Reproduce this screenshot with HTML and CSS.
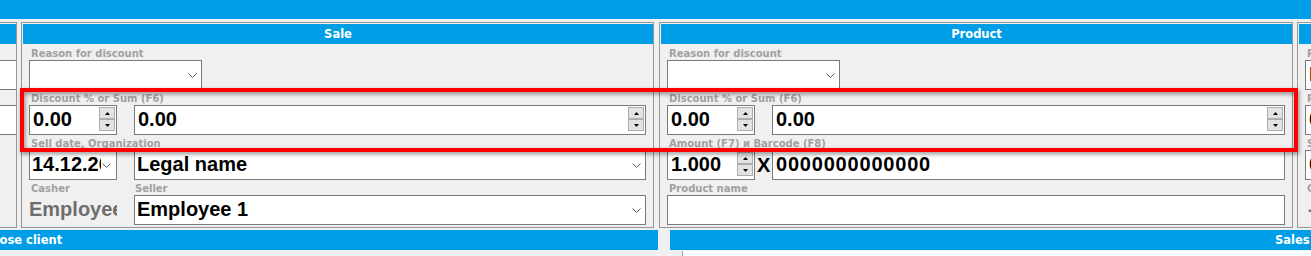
FILE: index.html
```html
<!DOCTYPE html>
<html>
<head>
<meta charset="utf-8">
<link rel="stylesheet" href="styles.css">
</head>
<body>
<div class="topbar"></div>

<div class="panels">
  <section class="panel panel-left">
    <div class="panel-head"></div>
    <div class="panel-body">
      <div class="row"><div class="label"></div><div class="box wide"></div></div>
      <div class="row"><div class="label"></div><div class="box wide"></div></div>
    </div>
  </section>

  <section class="panel panel-sale">
    <div class="panel-head">Sale</div>
    <div class="panel-body">
      <div class="row">
        <div class="label">Reason for discount</div>
        <div class="box combo reason"><span class="value"></span><svg class="chev" width="9" height="5" viewBox="0 0 9 5"><polyline points="0.5,0.5 4.5,4.5 8.5,0.5"/></svg></div>
      </div>
      <div class="row">
        <div class="label">Discount % or Sum (F6)</div>
        <div class="box c1"><span class="value">0.00</span><div class="spin"><div class="sbtn"><svg width="5" height="3" viewBox="0 0 5 3"><polygon points="2.5,0 5,3 0,3"/></svg></div><div class="sbtn"><svg width="5" height="3" viewBox="0 0 5 3"><polygon points="0,0 5,0 2.5,3"/></svg></div></div></div>
        <div class="box c3"><span class="value">0.00</span><div class="spin"><div class="sbtn"><svg width="5" height="3" viewBox="0 0 5 3"><polygon points="2.5,0 5,3 0,3"/></svg></div><div class="sbtn"><svg width="5" height="3" viewBox="0 0 5 3"><polygon points="0,0 5,0 2.5,3"/></svg></div></div></div>
      </div>
      <div class="row">
        <div class="label">Sell date, Organization</div>
        <div class="box c1 combo date"><span class="value">14.12.2019</span><svg class="chev" width="9" height="5" viewBox="0 0 9 5"><polyline points="0.5,0.5 4.5,4.5 8.5,0.5"/></svg></div>
        <div class="box c3 combo"><span class="value">Legal name</span><svg class="chev" width="9" height="5" viewBox="0 0 9 5"><polyline points="0.5,0.5 4.5,4.5 8.5,0.5"/></svg></div>
      </div>
      <div class="row">
        <div class="label c1">Casher</div>
        <div class="label c3">Seller</div>
        <div class="plain c1">Employee 1</div>
        <div class="box c3 combo"><span class="value">Employee 1</span><svg class="chev" width="9" height="5" viewBox="0 0 9 5"><polyline points="0.5,0.5 4.5,4.5 8.5,0.5"/></svg></div>
      </div>
    </div>
  </section>

  <section class="panel panel-product">
    <div class="panel-head">Product</div>
    <div class="panel-body">
      <div class="row">
        <div class="label">Reason for discount</div>
        <div class="box combo reason"><span class="value"></span><svg class="chev" width="9" height="5" viewBox="0 0 9 5"><polyline points="0.5,0.5 4.5,4.5 8.5,0.5"/></svg></div>
      </div>
      <div class="row">
        <div class="label">Discount % or Sum (F6)</div>
        <div class="box c1"><span class="value">0.00</span><div class="spin"><div class="sbtn"><svg width="5" height="3" viewBox="0 0 5 3"><polygon points="2.5,0 5,3 0,3"/></svg></div><div class="sbtn"><svg width="5" height="3" viewBox="0 0 5 3"><polygon points="0,0 5,0 2.5,3"/></svg></div></div></div>
        <div class="box c3"><span class="value">0.00</span><div class="spin"><div class="sbtn"><svg width="5" height="3" viewBox="0 0 5 3"><polygon points="2.5,0 5,3 0,3"/></svg></div><div class="sbtn"><svg width="5" height="3" viewBox="0 0 5 3"><polygon points="0,0 5,0 2.5,3"/></svg></div></div></div>
      </div>
      <div class="row">
        <div class="label">Amount (F7) и Barcode (F8)</div>
        <div class="box c1"><span class="value">1.000</span><div class="spin"><div class="sbtn"><svg width="5" height="3" viewBox="0 0 5 3"><polygon points="2.5,0 5,3 0,3"/></svg></div><div class="sbtn"><svg width="5" height="3" viewBox="0 0 5 3"><polygon points="0,0 5,0 2.5,3"/></svg></div></div></div>
        <div class="times c2">X</div>
        <div class="box c3"><span class="value barcode">0000000000000</span></div>
      </div>
      <div class="row">
        <div class="label">Product name</div>
        <div class="box wide"></div>
      </div>
    </div>
  </section>

  <section class="panel panel-right">
    <div class="panel-head"></div>
    <div class="panel-body">
      <div class="rcol">
        <div class="row one"><div class="label">Rounding</div><div class="box wide"><span class="value">Legal</span></div></div>
        <div class="row one"><div class="label">Received</div><div class="box wide"><span class="value">0.00</span></div></div>
        <div class="row one"><div class="label">Sum</div><div class="box wide"><span class="value">0.00</span></div></div>
        <div class="row one"><div class="label">Change</div><div class="plain wide">-</div></div>
      </div>
    </div>
  </section>
</div>

<div class="bottom">
  <div class="col-left">
    <div class="bar bar-left">Choose client</div>
  </div>
  <div class="col-right">
    <div class="bar bar-right">Sales</div>
    <div class="sales-body"><div class="gutter"></div><div class="cells"></div></div>
  </div>
</div>

<div class="highlight"></div>
</body>
</html>
```

FILE: styles.css
```css
body {
  margin: 0;
  width: 1311px;
  height: 256px;
  overflow: hidden;
  position: relative;
  background: #f0f0f0;
  font-family: "DejaVu Sans", sans-serif;
}

.topbar {
  height: 19px;
  background: #009ee6;
}

.panels {
  display: flex;
  gap: 4px;
  margin-top: 3px;
  height: 206px;
}

.panel {
  box-sizing: border-box;
  height: 206px;
  border: 1px solid #979797;
  overflow: hidden;
  flex: none;
}

.panel-left {
  width: 17px;
  border-left: 0;
}

.panel-sale {
  width: 633px;
}

.panel-product {
  width: 634px;
  margin-left: 1px;
}

.panel-right {
  flex: 1;
  min-width: 0;
  border-right: 0;
}

.panel-head {
  height: 20px;
  margin: 1px 0 0 1px;
  background: #009ee6;
  color: #fff;
  font-weight: 700;
  font-size: 11.5px;
  line-height: 20px;
  text-align: center;
  white-space: nowrap;
}

.panel-left .panel-head {
  margin-left: 0;
}

.panel-body {
  padding: 1px 7px 0;
}

.panel-left .panel-body {
  padding-left: 0;
}

.row {
  display: grid;
  grid-template-columns: 88px 17px 1fr;
  grid-template-rows: 15px 30px;
}

.row.one {
  grid-template-columns: 1fr;
}

.rcol {
  width: 220px;
}

.label {
  grid-column: 1 / -1;
  grid-row: 1;
  font-size: 10px;
  font-weight: 700;
  color: #a0a0a0;
  line-height: 15px;
  padding: 1px 0 0 2px;
  box-sizing: border-box;
  white-space: nowrap;
  overflow: hidden;
}

.label.c1 { grid-column: 1; }
.label.c3 { grid-column: 3; padding-left: 1px; }

.c1 { grid-column: 1; }
.c2 { grid-column: 2; }
.c3 { grid-column: 3; }
.wide { grid-column: 1 / -1; }

.box {
  grid-row: 2;
  box-sizing: border-box;
  height: 30px;
  border: 1px solid #7a7a7a;
  background: #fff;
  display: flex;
  align-items: center;
  min-width: 0;
  overflow: hidden;
}

.panel-left .box {
  margin-right: 7px;
  border-left: 0;
}

.box.reason {
  grid-column: 1 / -1;
  width: 173px;
}

.value {
  flex: 1;
  min-width: 0;
  overflow: hidden;
  white-space: nowrap;
  padding: 0 0 2px 3px;
  font-family: "Liberation Sans", Arial, sans-serif;
  font-weight: 700;
  font-size: 20px;
  color: #000;
}

.combo .value {
  padding-left: 2px;
}

.date .value {
  margin-right: 1px;
}

.barcode {
  letter-spacing: 0.8px;
}

.chev {
  flex: none;
  margin-right: 4px;
  fill: none;
  stroke: #5a5a5a;
  stroke-width: 1;
}

.date .chev {
  margin-right: 5px;
}

.spin {
  align-self: flex-start;
  margin: 1px 1px 0 0;
  display: flex;
  flex-direction: column;
  flex: none;
}

.sbtn {
  box-sizing: border-box;
  width: 16px;
  height: 12px;
  border: 1px solid #adadad;
  background: #e3e3e3;
  display: flex;
  align-items: center;
  justify-content: center;
}

.sbtn svg {
  fill: #000;
}

.plain {
  grid-row: 2;
  align-self: center;
  overflow: hidden;
  white-space: nowrap;
  padding-bottom: 2px;
  font-family: "Liberation Sans", Arial, sans-serif;
  font-weight: 700;
  font-size: 20px;
  color: #6e6e6e;
}

.panel-right .plain {
  padding-left: 3px;
}

.times {
  grid-row: 2;
  align-self: center;
  padding: 0 0 0 2px;
  font-family: "Liberation Sans", Arial, sans-serif;
  font-weight: 700;
  font-size: 20px;
  color: #000;
}

.bottom {
  display: flex;
  margin-top: 2px;
}

.col-left {
  width: 658px;
  flex: none;
}

.col-right {
  flex: 1;
  margin-left: 12px;
  min-width: 0;
}

.bar {
  height: 20px;
  background: #009ee6;
  color: #fff;
  font-weight: 700;
  font-size: 11.5px;
  line-height: 20px;
  white-space: nowrap;
  overflow: hidden;
}

.bar-left {
  text-indent: -25px;
}

.bar-right {
  padding-left: 605px;
}

.sales-body {
  display: flex;
  height: 10px;
  margin-top: 1px;
}

.gutter {
  width: 12px;
  background: #f0f0f0;
  border-right: 1px solid #a0a0a0;
}

.cells {
  flex: 1;
  background: #fff;
}

.highlight {
  position: absolute;
  left: 20px;
  top: 88px;
  width: 1278px;
  height: 64px;
  box-sizing: border-box;
  border: 4px solid #ff0000;
  filter: drop-shadow(1px 2px 2px rgba(0, 0, 0, 0.45));
}
```
